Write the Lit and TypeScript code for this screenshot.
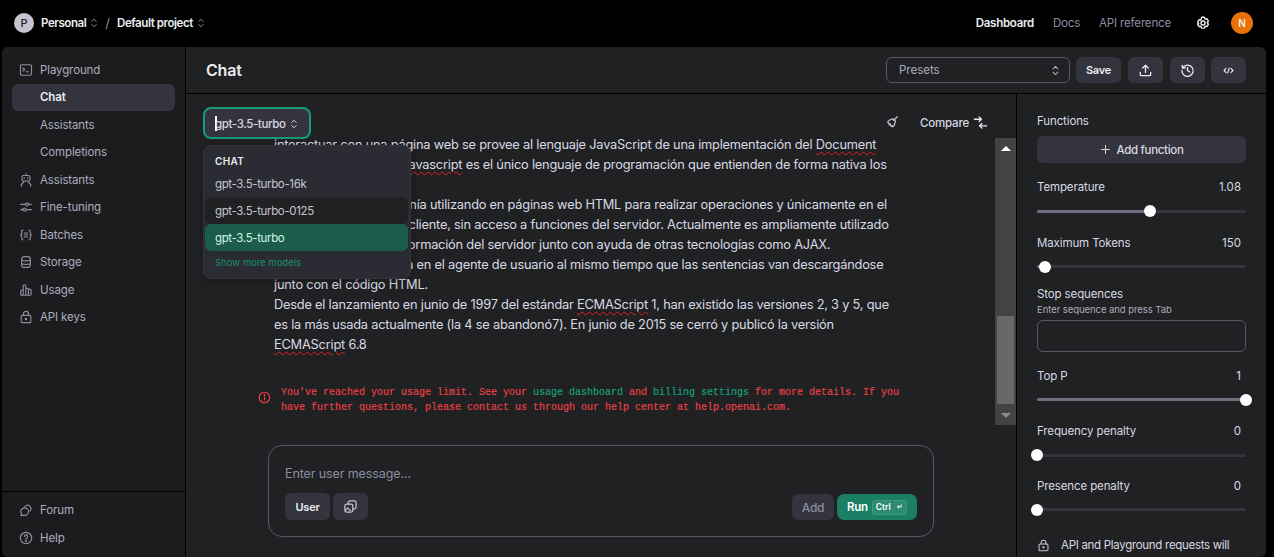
import { LitElement, html, css, svg } from "lit";
import { customElement } from "lit/decorators.js";

const ic = (body: unknown, size = 16, sw = 1.4) => html`<svg class="ic" width=${size} height=${size} viewBox="0 0 16 16" fill="none" stroke="currentColor" stroke-width=${sw} stroke-linecap="round" stroke-linejoin="round">${body}</svg>`;
const chevrons = (size = 12) => ic(svg`<path d="M5 6l3-3 3 3M5 10l3 3 3-3"/>`, size, 1.3);

const navIcons: Record<string, unknown> = {
  play: svg`<rect x="1.7" y="2" width="12.6" height="12" rx="1.6"/><path d="M4.5 5.7l2 1.7-2 1.7M8 10h3"/>`,
  bot: svg`<rect x="3.5" y="2.8" width="9" height="6.4" rx="1.6"/><path d="M8 1v1.8M6 5.6v.6M10 5.6v.6M2.5 15c0-3 2-4 3.4-5M13.5 15c0-3-2-4-3.4-5"/>`,
  tune: svg`<path d="M2 5h5.5M11 5h3M2 11h2.5M8 11h6"/><circle cx="9.2" cy="5" r="1.7"/><circle cx="6.2" cy="11" r="1.7"/>`,
  batch: svg`<path d="M4.5 2.5C3 2.5 3 3.5 3 5v1.5C3 7.5 2.5 8 1.500 8c1 0 1.500.5 1.500 1.500V11c0 1.500 0 2.500 1.500 2.500M11.500 2.500c1.500 0 1.500 1 1.500 2.500v1.500c0 1 .5 1.500 1.500 1.500-1 0-1.500.5-1.500 1.500V11c0 1.500 0 2.500-1.500 2.500M6 5.700h4M6 8h4M6 10.300h4"/>`,
  storage: svg`<rect x="3" y="1.800" width="10" height="12.400" rx="3"/><path d="M3 6c1.500 1 8.500 1 10 0M3 10c1.500 1 8.500 1 10 0"/>`,
  usage: svg`<path d="M2 14V9.500a1.200 1.200 0 0 1 2.800-.2M4.800 14V3.500a1.500 1.500 0 0 1 3 0V14M7.800 7.500a1.500 1.500 0 0 1 3 0V14M10.800 8.500a1.500 1.500 0 0 1 3 0V12.500a1.500 1.500 0 0 1-1.500 1.500H3.500A1.500 1.500 0 0 1 2 12.500"/>`,
  key: svg`<rect x="2.500" y="6.200" width="11" height="8.300" rx="1.500"/><path d="M5 6V4.500a3 3 0 0 1 6 0V6"/><circle cx="8" cy="10.300" r=".8" fill="currentColor"/>`,
  forum: svg`<path d="M6.200 4.500a4 4 0 1 1 6.300 4.800"/><path d="M6.500 5.500a4.300 4.300 0 0 1 0 8.600H2.200l.8-1.600a4.300 4.300 0 0 1 3.500-7z"/>`,
  help: svg`<circle cx="8" cy="8" r="6.500"/><path d="M6.300 6.300a1.800 1.800 0 1 1 2.700 1.500c-.7.400-1 .8-1 1.500"/><circle cx="8" cy="11.400" r=".5" fill="currentColor"/>`,
};

const sliders = [
  { label: "Temperature", value: "1.08", pct: 54 },
  { label: "Maximum Tokens", value: "150", pct: 4 },
];
const sliders2 = [
  { label: "Top P", value: "1", pct: 100 },
  { label: "Frequency penalty", value: "0", pct: 0 },
  { label: "Presence penalty", value: "0", pct: 0 },
];

@customElement("app-root")
export class AppRoot extends LitElement {
  static styles = css`
    :host { display: block; width: 1274px; height: 557px; overflow: hidden; background: #000; color: #ececf1;
      font-family: Inter, "Liberation Sans", sans-serif; font-size: 12px; }
    * { box-sizing: border-box; }
    .ic { display: block; flex: none; }
    .top { height: 47px; display: flex; align-items: center; padding: 0 21px 2px 14px; }
    .avatar { width: 20px; height: 20px; border-radius: 50%; background: #c5c5d2; color: #202123; display: flex; align-items: center; justify-content: center; font-size: 11px; font-weight: 500; margin-right: 7px; }
    .crumb { font-weight: 600; font-size: 11.500px; letter-spacing: -.42px; color: #ececf1; }
    .top .chev { color: #8e8ea0; margin: 0 0 0 2px; }
    .sep { color: #8e8ea0; margin: 0 7px 0 5px; font-size: 13px; }
    .spacer { flex: 1; }
    .tl { font-size: 11.500px; color: #8e8ea0; margin-left: 19px; letter-spacing: -.16px; }
    .tl.on { color: #ececf1; font-weight: 600; letter-spacing: -.28px; }
    .gear { margin: 0 20px 0 24px; color: #ececf1; }
    .me { width: 22px; height: 22px; border-radius: 50%; background: #e8710a; color: #fff; display: flex; align-items: center; justify-content: center; font-size: 10px; font-weight: 500; }

    .panel { margin: 0 8px 0 2px; height: 510px; border-radius: 6px; background: #202123; display: flex; overflow: hidden; }
    .side { width: 184px; flex: none; background: #1c1c1f; border-right: 1px solid #000; display: flex; flex-direction: column; }
    .navs { flex: 1; padding: 9px 10px 0; }
    .item { height: 27.500px; display: flex; align-items: center; padding-left: 7px; color: #acacbe; font-size: 11.500px; border-radius: 6px; letter-spacing: -.12px; }
    .item .ic { color: #8e8ea0; margin-right: 7px; }
    .item.sub { padding-left: 28px; }
    .item.on { background: #33343d; color: #ececf1; font-weight: 600; }
    .foot { border-top: 1px solid #000; padding: 4.500px 10px 0; height: 66px; }

    .main { flex: 1; display: flex; flex-direction: column; min-width: 0; }
    .head { height: 47px; flex: none; border-bottom: 1px solid #000; display: flex; align-items: center; padding: 0 20px 0 20px; }
    .head h1 { margin: 0; font-size: 16px; font-weight: 600; color: #ececf1; letter-spacing: -.2px; flex: 1; }
    .presets { width: 184px; height: 26px; border: 1px solid #565869; border-radius: 6px; display: flex; align-items: center; justify-content: space-between; padding: 0 7px 0 12px; color: #acacbe; font-size: 11.500px; margin-right: 6px; }
    .btn { height: 26px; background: #33343d; border-radius: 6px; display: flex; align-items: center; justify-content: center; color: #ececf1; font-size: 11px; font-weight: 600; letter-spacing: -.2px; }
    .save { width: 45px; margin-right: 7px; }
    .sq { width: 35px; margin-right: 7px; font-weight: 400; }
    .sq:last-child { margin-right: 0; margin-left: -1px; }

    .body { flex: 1; display: flex; min-height: 0; }
    .center { flex: 1; min-width: 0; display: flex; flex-direction: column; position: relative; }
    .tools { height: 44px; flex: none; display: flex; align-items: flex-start; padding: 13px 0 0 17px; }
    .model { width: 108px; height: 32px; border: 2px solid #159a7a; border-radius: 8px; background: #33343d; display: flex; align-items: center; padding: 1px 0 0 10px; font-size: 11.500px; font-weight: 500; color: #d9d9e3; letter-spacing: -.38px; position: relative; z-index: 3; flex: none; }
    .caret { display: inline-block; width: 2px; height: 15px; background: #fff; margin-right: -2px; }
    .model .ic { margin-left: 3px; }
    .tools .spacer { flex: 1; }
    .broom { color: #c5c5d2; margin: 8px 21px 0 0; }
    .compare { font-size: 11.500px; font-weight: 500; color: #d9d9e3; margin: 9px 4px 0 0; letter-spacing: -.2px; }
    .swap { margin: 8px 28px 0 0; color: #ececf1; }

    .menu { position: absolute; left: 17px; top: 51px; width: 208px; height: 134px; background: #2a2b33; border: 1px solid #33343d; border-radius: 8px; z-index: 4; padding: 0 1px; box-shadow: 0 2px 8px rgba(0,0,0,.25); }
    .menu h4 { margin: 0; height: 24px; padding: 9px 0 0 10px; font-size: 10px; font-weight: 600; letter-spacing: .3px; color: #ececf1; }
    .opt { height: 27px; margin-right: 1px; border-radius: 6px; padding-left: 10px; display: flex; align-items: center; font-size: 11.500px; color: #c5c5d2; letter-spacing: -.36px; }
    .opt.hov { background: #202123; }
    .opt.sel { background: #1c5c4a; color: #d1f5e6; }
    .more { padding: 6px 0 0 10px; font-size: 9.500px; color: #19936f; }

    .scrollwrap { height: 287px; flex: none; display: flex; }
    .scroller { flex: 1; overflow: hidden; min-width: 0; }
    .text { margin: -3px 0 0 88px; font-size: 12.800px; line-height: 20px; color: #d9d9e3; letter-spacing: -.21px; }
    .text div { white-space: nowrap; height: 20px; }
    .sq-err { text-decoration: underline wavy #e02020 1px; text-underline-offset: 2px; }
    .error { display: flex; margin: 30px 0 0 72px; font-family: "Liberation Mono", monospace; font-size: 10px; line-height: 15px; color: #ef4146; -webkit-text-stroke: .15px currentColor; }
    .error .ic { margin: 6px 10px 0 0; }
    .error span.g { color: #19a37a; }
    .bar { width: 21px; flex: none; background: #434343; display: flex; flex-direction: column; align-items: center; }
    .arrow { height: 20px; flex: none; display: flex; align-items: center; justify-content: center; }
    .track { flex: 1; width: 100%; padding: 158px 2px 0; }
    .thumb { height: 88px; background: #686868; }
    .up { width: 0; height: 0; border: 5px solid transparent; border-top: 0; border-bottom: 5px solid #fff; }
    .down { width: 0; height: 0; border: 5px solid transparent; border-bottom: 0; border-top: 5px solid #8a8a8a; }

    .composer { margin: 20px 0 0 82px; width: 666px; height: 92px; border: 1px solid #565869; border-radius: 14px; padding: 20px 16px 0; display: flex; flex-direction: column; flex: none; }
    .ph { font-size: 12.500px; color: #8e8ea0; height: 27px; letter-spacing: -.1px; }
    .row { display: flex; align-items: flex-end; }
    .user { width: 45px; height: 27px; margin-right: 3px; }
    .pic { width: 35px; height: 27px; color: #c5c5d2; }
    .add { width: 42px; margin-right: 3px; color: #8e8ea0; font-weight: 500; font-size: 12px; }
    .run { width: 80px; height: 26px; border-radius: 7px; background: #1a7f64; display: flex; align-items: center; padding-left: 10px; color: #fff; font-size: 11.500px; font-weight: 600; letter-spacing: -.3px; }
    .kbd { margin-left: 4px; height: 15px; width: 35px; border: 1px solid #3d9a80; background: #2c8b71; border-radius: 3px; display: flex; align-items: center; justify-content: space-between; padding: 0 3px; font-size: 8.500px; letter-spacing: 0; }
    .kbd .ret { font-size: 7px; font-family: "DejaVu Sans", sans-serif; }

    .right { width: 250px; flex: none; border-left: 1px solid #000; padding: 20px 20px 0 20px; background: #202123; }
    .lab { font-size: 11.500px; line-height: 14px; color: #d9d9e3; letter-spacing: -.12px; }
    .fn { height: 27px; margin-top: 8px; background: #33343d; border-radius: 6px; display: flex; align-items: center; justify-content: center; gap: 4px; font-size: 11.500px; font-weight: 500; color: #d9d9e3; letter-spacing: -.32px; }
    .s-row { display: flex; justify-content: space-between; padding-right: 5px; align-items: center; height: 16px; }
    .val { font-size: 11.500px; color: #d9d9e3; }
    .slider { height: 3px; background: #33343d; border-radius: 2px; position: relative; margin: 14.500px 0 0; }
    .fill { height: 100%; background: #6e6e80; border-radius: 2px; }
    .knob { position: absolute; top: -4.500px; width: 12px; height: 12px; margin-left: -6px; border-radius: 50%; background: #fff; }
    .stop { margin-top: 19px; }
    .hint { font-size: 9.500px; line-height: 11.500px; color: #acacbe; margin-top: 3px; letter-spacing: -.06px; }
    .field { height: 32px; border: 1px solid #565869; border-radius: 6px; margin-top: 4px; }
    .privacy { display: flex; align-items: center; gap: 11px; margin: 27px 0 0 0; font-size: 11.500px; line-height: 14px; color: #d9d9e3; white-space: nowrap; letter-spacing: -.3px; }
    .privacy .ic { color: #c5c5d2; }
  `;

  private navItem(label: string, icon?: string, extra = "") {
    return html`<div class="item ${icon ? "" : "sub"} ${extra}">${icon ? ic(navIcons[icon], 14, 1.3) : ""}${label}</div>`;
  }

  private slider(s: { label: string; value: string; pct: number }, gapTop: number) {
    return html`<div style="margin-top:${gapTop}px">
      <div class="s-row"><span class="lab">${s.label}</span><span class="val">${s.value}</span></div>
      <div class="slider"><div class="fill" style="width:${s.pct}%"></div><div class="knob" style="left:${s.pct}%"></div></div>
    </div>`;
  }

  render() {
    return html`
      <div class="top">
        <div class="avatar">P</div><span class="crumb">Personal</span><span class="chev">${chevrons()}</span>
        <span class="sep">/</span><span class="crumb">Default project</span><span class="chev">${chevrons()}</span>
        <div class="spacer"></div>
        <span class="tl on">Dashboard</span><span class="tl">Docs</span><span class="tl">API reference</span>
        <span class="gear">${ic(svg`<path d="M6.600 1.500h2.800l.7 1.800 1.900-.3 1.400 2.400-1.200 1.500 1.200 1.500-1.400 2.400-1.900-.3-.7 1.800H6.600l-.7-1.800-1.900.3-1.400-2.400L3.800 8 2.600 6.400 4 4l1.900.3z" transform="translate(0 .8)"/><circle cx="8" cy="8" r="2"/>`, 16, 1.4)}</span>
        <div class="me">N</div>
      </div>
      <div class="panel">
        <aside class="side">
          <div class="navs">
            ${this.navItem("Playground", "play")}
            ${this.navItem("Chat", undefined, "on")}
            ${this.navItem("Assistants")}
            ${this.navItem("Completions")}
            ${this.navItem("Assistants", "bot")}
            ${this.navItem("Fine-tuning", "tune")}
            ${this.navItem("Batches", "batch")}
            ${this.navItem("Storage", "storage")}
            ${this.navItem("Usage", "usage")}
            ${this.navItem("API keys", "key")}
          </div>
          <div class="foot">
            ${this.navItem("Forum", "forum")}
            ${this.navItem("Help", "help")}
          </div>
        </aside>
        <div class="main">
          <header class="head">
            <h1>Chat</h1>
            <div class="presets"><span>Presets</span>${chevrons(13)}</div>
            <div class="btn save">Save</div>
            <div class="btn sq">${ic(svg`<path d="M8 10V2.500M5 5.300L8 2.300l3 3M2.500 10v2.500a1 1 0 0 0 1 1h9a1 1 0 0 0 1-1V10"/>`, 15)}</div>
            <div class="btn sq">${ic(svg`<path d="M2.800 5.200A6 6 0 1 1 2 8M2.300 2.500l.4 3 3-.4M8 4.800V8l2.200 1.500"/>`, 15)}</div>
            <div class="btn sq">${ic(svg`<path d="M5 5.500L2.500 8 5 10.500M11 5.500L13.500 8 11 10.500M9 5l-2 6"/>`, 13)}</div>
          </header>
          <div class="body">
            <section class="center">
              <div class="tools">
                <div class="model"><span class="caret"></span>gpt-3.5-turbo${chevrons()}</div>
                <div class="spacer"></div>
                <span class="broom">${ic(svg`<path d="M14 2l-4 4M9.500 4.500l2.500 2.500-1.500 5-2 1.500L3 8l1.500-2z"/><path d="M6 10l-1.500 1.500M8 12l-1 1"/>`, 14)}</span>
                <span class="compare">Compare</span>
                <span class="swap">${ic(svg`<path d="M1.500 4.500h7M6.500 2l2.500 2.500L6.500 7M14.500 11.500h-7M9.500 9L7 11.500 9.500 14"/>`, 15)}</span>
              </div>
              <div class="menu">
                <h4>CHAT</h4>
                <div class="opt">gpt-3.5-turbo-16k</div>
                <div class="opt hov">gpt-3.5-turbo-0125</div>
                <div class="opt sel">gpt-3.5-turbo</div>
                <div class="more">Show more models</div>
              </div>
              <div class="scrollwrap">
                <div class="scroller">
                  <div class="text">
                    <div>interactuar con una página web se provee al lenguaje JavaScript de una implementación del <span class="sq-err">Document</span></div>
                    <div>Object Model (DOM). <span class="sq-err">Javascript</span> es el único lenguaje de programación que entienden de forma nativa los</div>
                    <div>navegadores.</div>
                    <div>Tradicionalmente se venía utilizando en páginas web HTML para realizar operaciones y únicamente en el</div>
                    <div>marco de la aplicación cliente, sin acceso a funciones del servidor. Actualmente es ampliamente utilizado</div>
                    <div>para enviar y recibir información del servidor junto con ayuda de otras tecnologías como AJAX.</div>
                    <div>JavaScript se interpreta en el agente de usuario al mismo tiempo que las sentencias van descargándose</div>
                    <div>junto con el código HTML.</div>
                    <div>Desde el lanzamiento en junio de 1997 del estándar <span class="sq-err">ECMAScript</span> 1, han existido las versiones 2, 3 y 5, que</div>
                    <div>es la más usada actualmente (la 4 se abandonó7). En junio de 2015 se cerró y publicó la versión</div>
                    <div><span class="sq-err">ECMAScript</span> 6.8</div>
                  </div>
                  <div class="error">
                    ${ic(svg`<circle cx="8" cy="8" r="6.500"/><path d="M8 7.500v3.500"/><circle cx="8" cy="5" r=".5" fill="currentColor"/>`, 13)}
                    <div>You've reached your usage limit. See your <span class="g">usage dashboard</span> and <span class="g">billing settings</span> for more details. If you<br />have further questions, please contact us through our help center at help.openai.com.</div>
                  </div>
                </div>
                <div class="bar">
                  <div class="arrow"><span class="up"></span></div>
                  <div class="track"><div class="thumb"></div></div>
                  <div class="arrow"><span class="down"></span></div>
                </div>
              </div>
              <div class="composer">
                <div class="ph">Enter user message...</div>
                <div class="row">
                  <div class="btn user">User</div>
                  <div class="btn pic">${ic(svg`<rect x="2" y="5.500" width="8.500" height="8.500" rx="2"/><path d="M5.500 5.500V4a2 2 0 0 1 2-2H12a2 2 0 0 1 2 2v4.500a2 2 0 0 1-2 2h-1.500M2.500 12l2.500-2.500 3 3"/>`, 15, 1.3)}</div>
                  <div class="spacer"></div>
                  <div class="btn add">Add</div>
                  <div class="run">Run<span class="kbd"><span>Ctrl</span><span class="ret">↵</span></span></div>
                </div>
              </div>
            </section>
            <aside class="right">
              <div class="lab">Functions</div>
              <div class="fn">${ic(svg`<path d="M8 3v10M3 8h10"/>`, 13, 1.2)}Add function</div>
              ${this.slider(sliders[0], 16)}
              ${this.slider(sliders[1], 22)}
              <div class="stop lab">Stop sequences</div>
              <div class="hint">Enter sequence and press Tab</div>
              <div class="field"></div>
              ${this.slider(sliders2[0], 16)}
              ${this.slider(sliders2[1], 22)}
              ${this.slider(sliders2[2], 21)}
              <div class="privacy">${ic(navIcons.key, 13, 1.3)}<span>API and Playground requests will</span></div>
            </aside>
          </div>
        </div>
      </div>
    `;
  }
}
